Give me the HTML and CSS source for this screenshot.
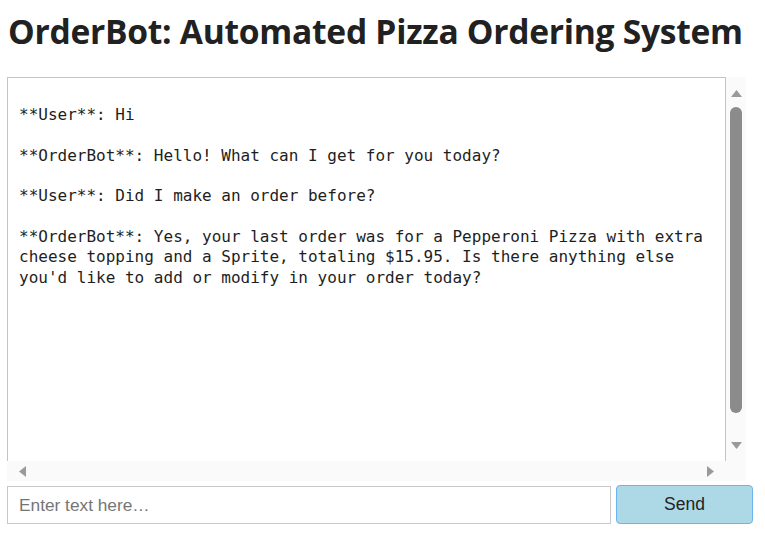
FILE: index.html
```html
<!DOCTYPE html>
<html lang="en">
<head>
<meta charset="utf-8">
<title>OrderBot</title>
<link rel="stylesheet" href="styles.css">
</head>
<body>
<main class="app">
  <h1 class="title">OrderBot: Automated Pizza Ordering System</h1>
  <div class="chat">
    <div class="viewport">
      <div class="log">
**User**: Hi

**OrderBot**: Hello! What can I get for you today?

**User**: Did I make an order before?

**OrderBot**: Yes, your last order was for a Pepperoni Pizza with extra cheese topping and a Sprite, totaling $15.95. Is there anything else you'd like to add or modify in your order today?</div>
    </div>
    <div class="vbar">
      <div class="btn btn-up"><svg width="11" height="7" viewBox="0 0 11 7"><polygon points="5.5,0 11,7 0,7" fill="#9a9a9a"/></svg></div>
      <div class="vtrack"><div class="vthumb"></div></div>
      <div class="btn btn-down"><svg width="11" height="7" viewBox="0 0 11 7"><polygon points="0,0 11,0 5.5,7" fill="#9a9a9a"/></svg></div>
    </div>
    <div class="hbar">
      <div class="hbtn hbtn-left"><svg width="7" height="11" viewBox="0 0 7 11"><polygon points="7,0 7,11 0,5.5" fill="#9a9a9a"/></svg></div>
      <div class="htrack"></div>
      <div class="hbtn hbtn-right"><svg width="7" height="11" viewBox="0 0 7 11"><polygon points="0,0 7,5.5 0,11" fill="#9a9a9a"/></svg></div>
    </div>
    <div class="corner"></div>
  </div>
  <form class="composer">
    <input class="composer-input" type="text" placeholder="Enter text here…">
    <button class="composer-send" type="button">Send</button>
  </form>
</main>
</body>
</html>
```
FILE: styles.css
```css
html, body {
  margin: 0;
  padding: 0;
  background: #ffffff;
}

.app {
  padding: 0 7px;
  display: flex;
  flex-direction: column;
  width: 746px;
}

.title {
  margin: 8px 0 0 1px;
  font-family: "Open Sans", "Noto Sans", sans-serif;
  font-weight: 700;
  font-size: 33.6px;
  line-height: 46px;
  color: #212121;
  letter-spacing: -0.27px;
  white-space: nowrap;
}

.chat {
  margin-top: 23px;
  display: grid;
  grid-template-columns: 719px 20px;
  grid-template-rows: 384px 20px;
  width: 739px;
}

.viewport {
  overflow: hidden;
}

.log {
  box-sizing: border-box;
  width: 719px;
  height: 420px;
  border: 1px solid #c4c4c4;
  padding: 7px 11px 6px;
  white-space: pre-wrap;
  font-family: "DejaVu Sans Mono", "Liberation Mono", monospace;
  font-size: 16px;
  line-height: 20.3px;
  color: #1e1e1e;
}

.vbar {
  display: flex;
  flex-direction: column;
  background: #fafafa;
}

.btn {
  height: 24px;
  box-sizing: border-box;
  display: flex;
  justify-content: center;
}

.btn svg,
.hbtn svg {
  display: block;
}

.btn-up {
  padding-top: 13px;
}

.btn-down {
  padding-top: 5px;
}

.vtrack {
  flex: 1;
  padding: 6px 4px 0;
}

.vthumb {
  height: 306px;
  background: #8b8b8b;
  border-radius: 6px;
}

.hbar {
  display: flex;
  background: #fafafa;
}

.hbtn {
  width: 24px;
  box-sizing: border-box;
  display: flex;
  align-items: center;
}

.hbtn-left {
  padding-left: 12px;
}

.hbtn-right {
  padding-left: 5px;
}

.htrack {
  flex: 1;
}

.corner {
  background: #fafafa;
}

.composer {
  margin: 4px 0 0;
  display: flex;
  gap: 5px;
  width: 746px;
}

.composer-input {
  flex: 1;
  box-sizing: border-box;
  height: 38px;
  margin: 1px 0 0;
  padding: 0 11px;
  border: 1px solid #c8c8c8;
  border-radius: 0;
  font-family: "Liberation Sans", Arial, sans-serif;
  font-size: 17.3px;
  color: #222;
  outline: none;
}

.composer-input::placeholder {
  color: #757575;
}

.composer-send {
  box-sizing: border-box;
  width: 137px;
  height: 39px;
  border: 1px solid #6cb4ef;
  border-radius: 4px;
  background: #add8e6;
  font-family: "Liberation Sans", Arial, sans-serif;
  font-size: 17.5px;
  color: #222;
  cursor: pointer;
}
```
